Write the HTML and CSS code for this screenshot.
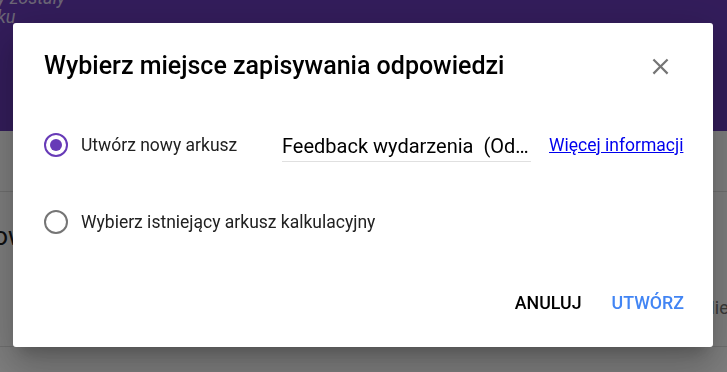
FILE: index.html
```html
<!DOCTYPE html>
<html lang="pl">
<head>
<meta charset="utf-8">
<title>Wybierz miejsce zapisywania odpowiedzi</title>
<link rel="stylesheet" href="styles.css">
</head>
<body>
<div class="page">
  <header class="hero">
    <p class="hero-note">y zostały<br>ku</p>
  </header>
  <nav class="tabs"></nav>
  <main class="content">
    <h2 class="content-title">0 odpowiedzi</h2>
    <div class="settings-row"><span class="settings-label">Nie</span></div>
  </main>
</div>
<div class="scrim"></div>
<div class="dialog" role="dialog" aria-labelledby="dlg-title">
  <div class="dialog-header">
    <h1 class="dialog-title" id="dlg-title">Wybierz miejsce zapisywania odpowiedzi</h1>
    <button class="icon-btn" aria-label="Zamknij">
      <svg viewBox="0 0 24 24" width="27" height="27" aria-hidden="true"><path d="M19 6.41L17.59 5 12 10.59 6.41 5 5 6.41 10.59 12 5 17.59 6.41 19 12 13.41 17.59 19 19 17.59 13.41 12z" fill="#757575"/></svg>
    </button>
  </div>
  <div class="dialog-body">
    <div class="option">
      <span class="radio radio-checked"></span>
      <span class="option-label">Utwórz nowy arkusz</span>
      <div class="sheet-name">Feedback wydarzenia  (Od…</div>
      <a class="more-link" href="#">Więcej informacji</a>
    </div>
    <div class="option">
      <span class="radio"></span>
      <span class="option-label">Wybierz istniejący arkusz kalkulacyjny</span>
    </div>
  </div>
  <div class="dialog-actions">
    <button class="text-btn">Anuluj</button>
    <button class="text-btn text-btn-primary">Utwórz</button>
  </div>
</div>
</body>
</html>
```
FILE: styles.css
```css
* { box-sizing: border-box; }
html, body { margin: 0; height: 100%; }
body {
  font-family: Roboto, "Noto Sans", "Liberation Sans", sans-serif;
  background: #fff;
  overflow: hidden;
}
.page { height: 100vh; }
.hero {
  height: 131px;
  background: #673ab7;
  overflow: hidden;
}
.hero-note {
  margin: -12px 0 0 -3px;
  font-size: 18px;
  line-height: 19px;
  font-style: italic;
  color: rgba(255, 255, 255, 0.75);
}
.tabs {
  height: 61px;
  border-bottom: 1px solid #e0e0e0;
}
.content {
  padding-top: 28px;
}
.content-title {
  margin: 0 0 0 -72px;
  font-size: 26px;
  line-height: 32px;
  font-weight: 400;
  color: #202124;
  white-space: nowrap;
}
.settings-row {
  margin-top: 44px;
  padding-left: 702px;
  white-space: nowrap;
  padding-bottom: 26px;
  border-bottom: 1px solid #e0e0e0;
}
.settings-label {
  font-size: 18px;
  line-height: 24px;
  color: #757575;
}
.scrim {
  position: fixed;
  inset: 0;
  background: rgba(0, 0, 0, 0.5);
}
.dialog {
  position: fixed;
  left: 13px;
  top: 23px;
  width: 700px;
  height: 324px;
  background: #fff;
  border-radius: 3px;
  box-shadow: 0 11px 15px -7px rgba(0,0,0,.2), 0 24px 38px 3px rgba(0,0,0,.14), 0 9px 46px 8px rgba(0,0,0,.12);
  display: flex;
  flex-direction: column;
  padding: 19px 29px 0 31px;
}
.dialog-header {
  display: flex;
  align-items: center;
  justify-content: space-between;
  height: 48px;
}
.dialog-title {
  margin: 0;
  font-size: 25px;
  line-height: 32px;
  font-weight: 500;
  color: #000;
}
.icon-btn {
  width: 48px;
  height: 48px;
  padding: 0;
  border: 0;
  background: none;
  display: flex;
  align-items: center;
  justify-content: center;
}
.dialog-body {
  margin-top: 31px;
}
.option {
  display: flex;
  align-items: center;
  height: 48px;
}
.option + .option {
  margin-top: 29px;
}
.radio {
  flex: none;
  width: 24px;
  height: 24px;
  border: 2.5px solid #757575;
  border-radius: 50%;
  display: flex;
  align-items: center;
  justify-content: center;
}
.radio-checked { border-color: #673ab7; }
.radio-checked::after {
  content: "";
  width: 12px;
  height: 12px;
  border-radius: 50%;
  background: #673ab7;
}
.option-label {
  flex: none;
  min-width: 201px;
  margin-left: 13px;
  font-size: 17.5px;
  line-height: 24px;
  color: #212121;
}
.sheet-name {
  flex: none;
  width: 249px;
  margin-top: 6px;
  padding-bottom: 3px;
  font-size: 20px;
  line-height: 24px;
  color: #000;
  white-space: pre;
  overflow: hidden;
  border-bottom: 1px solid #e0e0e0;
}
.more-link {
  margin-left: 18px;
  font-size: 17.5px;
  line-height: 24px;
  color: #0000ee;
  text-decoration: underline;
  white-space: nowrap;
}
.dialog-actions {
  margin-top: auto;
  margin-right: -10px;
  padding-bottom: 22px;
  display: flex;
  justify-content: flex-end;
  gap: 10px;
}
.text-btn {
  height: 44px;
  padding: 0 10px;
  border: 0;
  background: none;
  font-family: inherit;
  font-size: 17.8px;
  line-height: 20px;
  font-weight: 500;
  text-transform: uppercase;
  color: #000;
}
.text-btn-primary { color: #4285f4; }
```
